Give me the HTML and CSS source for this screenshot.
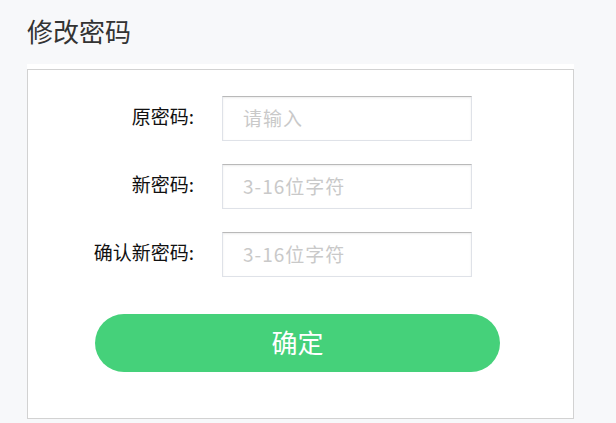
FILE: index.html
```html
<!DOCTYPE html>
<html lang="zh-CN">
<head>
<meta charset="utf-8">
<title>修改密码</title>
<link rel="stylesheet" href="styles.css">
</head>
<body>
<div class="page">
  <h1 class="title">修改密码</h1>
  <div class="card">
    <div class="card-inner">
      <form class="form">
        <div class="row">
          <label class="label">原密码:</label>
          <input class="input" type="password" placeholder="请输入">
        </div>
        <div class="row">
          <label class="label">新密码:</label>
          <input class="input" type="password" placeholder="3-16位字符">
        </div>
        <div class="row">
          <label class="label">确认新密码:</label>
          <input class="input" type="password" placeholder="3-16位字符">
        </div>
        <button class="submit" type="button">确定</button>
      </form>
    </div>
  </div>
</div>
</body>
</html>
```

FILE: styles.css
```css
html, body {
  margin: 0;
  padding: 0;
  background: #f7f8fa;
  font-family: "Noto Sans CJK SC", "Noto Sans", sans-serif;
}
.page {
  width: 616px;
  height: 423px;
  overflow: hidden;
}
.title {
  margin: 0;
  height: 64px;
  box-sizing: border-box;
  padding: 16px 0 0 27px;
  font-size: 26px;
  line-height: 30px;
  font-weight: normal;
  color: #333;
}
.card {
  margin-left: 27px;
  width: 547px;
  background: #fff;
  padding-top: 5px;
}
.card-inner {
  border: 1px solid #d2d2d2;
  padding: 26px 0 46px 0;
}
.form {
  display: flex;
  flex-direction: column;
  gap: 23px;
}
.row {
  display: grid;
  grid-template-columns: 166px 250px;
  column-gap: 28px;
  align-items: center;
}
.label {
  text-align: right;
  font-size: 19px;
  color: #111;
  line-height: 24px;
  padding-bottom: 6px;
}
.input {
  box-sizing: border-box;
  width: 250px;
  height: 45px;
  border: 1px solid #dfe2e8;
  border-top-color: #b9b9b9;
  box-shadow: inset 0 1px 2px rgba(0,0,0,0.08);
  padding: 0 0 3px 20px;
  font-family: "Noto Sans CJK SC", "Noto Sans", sans-serif;
  font-size: 19px;
  letter-spacing: 1px;
  outline: none;
  background: #fff;
}
.input::placeholder {
  color: #c9c9c9;
}
.submit {
  margin: 14px 0 0 67px;
  width: 405px;
  height: 58px;
  border: none;
  border-radius: 29px;
  background: #45d17a;
  color: #fff;
  font-family: "Noto Sans CJK SC", "Noto Sans", sans-serif;
  font-size: 26px;
  padding: 0 0 4px 0;
}
```
